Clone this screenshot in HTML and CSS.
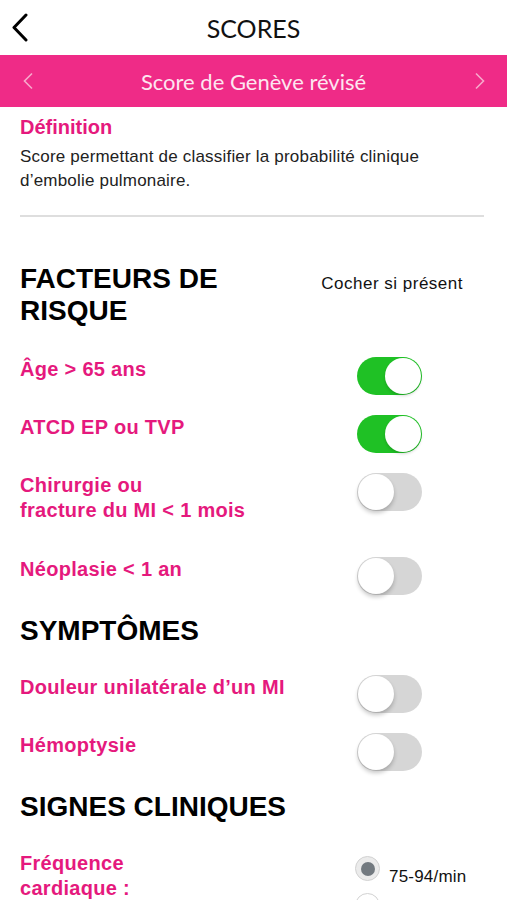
FILE: index.html
```html
<html lang="fr">
<head>
    <meta charset="UTF-8">
    <meta name="viewport" content="width=device-width, initial-scale=1.0">
    <title>Scores</title>
    <link rel="stylesheet" href="styles.css">
</head>
<body>
    <header class="topbar">
        <a class="back" href="#">
            <svg width="20" height="30" viewBox="0 0 20 30"><path d="M15 2 L3 14.5 L15 27" fill="none" stroke="#000" stroke-width="3" stroke-linecap="round" stroke-linejoin="round"/></svg>
        </a>
        <h1>SCORES</h1>
        <span></span>
    </header>

    <nav class="score-bar">
        <a href="#" class="arrow">
            <svg width="12" height="18" viewBox="0 0 12 18"><path d="M10 1.5 L2.5 9 L10 16.5" fill="none" stroke="#f7a9cb" stroke-width="1.6"/></svg>
        </a>
        <div class="score-title">Score de Genève révisé</div>
        <a href="#" class="arrow">
            <svg width="12" height="18" viewBox="0 0 12 18"><path d="M2 1.5 L9.5 9 L2 16.5" fill="none" stroke="#f7a9cb" stroke-width="1.6"/></svg>
        </a>
    </nav>

    <main class="content">
        <h3 class="def-title">Définition</h3>
        <p class="def-text">Score permettant de classifier la probabilité clinique d’embolie pulmonaire.</p>
        <hr class="divider">

        <div class="section-head">
            <h2>FACTEURS DE RISQUE</h2>
            <span class="note">Cocher si présent</span>
        </div>

        <div class="row">
            <label>Âge &gt; 65 ans</label>
            <span class="toggle on"><span class="knob"></span></span>
        </div>
        <div class="row">
            <label>ATCD EP ou TVP</label>
            <span class="toggle on"><span class="knob"></span></span>
        </div>
        <div class="row two-lines">
            <label>Chirurgie ou<br>fracture du MI &lt; 1 mois</label>
            <span class="toggle"><span class="knob"></span></span>
        </div>
        <div class="row">
            <label>Néoplasie &lt; 1 an</label>
            <span class="toggle"><span class="knob"></span></span>
        </div>

        <h2>SYMPTÔMES</h2>
        <div class="row">
            <label>Douleur unilatérale d’un MI</label>
            <span class="toggle"><span class="knob"></span></span>
        </div>
        <div class="row">
            <label>Hémoptysie</label>
            <span class="toggle"><span class="knob"></span></span>
        </div>

        <h2>SIGNES CLINIQUES</h2>
        <div class="row">
            <label>Fréquence<br>cardiaque :</label>
            <div class="options">
                <div class="option">
                    <span class="radio checked"><span class="dot"></span></span>
                    <span class="option-text">75-94/min</span>
                </div>
                <div class="option">
                    <span class="radio"></span>
                    <span class="option-text">≥ 95/min</span>
                </div>
            </div>
        </div>
    </main>
</body>
</html>
```

FILE: styles.css
```css
body {
    margin: 0;
    font-family: "Liberation Sans", Arial, sans-serif;
    background-color: #fff;
    color: #111;
}
.topbar {
    height: 55px;
    display: grid;
    grid-template-columns: 55px 1fr 55px;
    align-items: center;
}
.back {
    display: flex;
    padding-left: 11px;
    padding-top: 1px;
}
.topbar h1 {
    margin: 0;
    text-align: center;
    font-family: Lato, sans-serif;
    font-weight: 400;
    font-size: 25px;
    color: #111;
}
.score-bar {
    height: 52px;
    background-color: #ef2b87;
    display: grid;
    grid-template-columns: 55px 1fr 55px;
    align-items: center;
}
.arrow {
    display: flex;
    justify-content: center;
}
.score-title {
    text-align: center;
    font-family: Lato, sans-serif;
    font-size: 22px;
    color: #fde6f0;
}
.content {
    padding: 0 23px 0 20px;
}
.def-title {
    margin: 9px 0 0;
    font-size: 20px;
    line-height: 22px;
    color: #e5197d;
}
.def-text {
    margin: 7px 0 0;
    max-width: 440px;
    font-size: 17px;
    line-height: 24px;
    letter-spacing: 0.2px;
    color: #222;
}
.divider {
    margin: 22px 0 0;
    border: none;
    border-top: 2px solid #dedede;
}
h2 {
    margin: 0 0 28px;
    font-size: 28px;
    line-height: 32px;
    font-weight: bold;
    color: #000;
}
.section-head {
    display: flex;
    align-items: flex-start;
    margin-top: 46px;
    margin-bottom: 30px;
}
.section-head h2 {
    flex: 1;
    margin: 0;
    padding-right: 40px;
}
.note {
    padding-top: 11px;
    margin-right: 21px;
    font-size: 17px;
    line-height: 20px;
    letter-spacing: 0.5px;
    color: #111;
}
.row {
    display: flex;
    justify-content: space-between;
    align-items: flex-start;
    margin-bottom: 20px;
}
.row.two-lines {
    margin-bottom: 34px;
}
.row label {
    font-size: 20px;
    line-height: 25px;
    letter-spacing: 0.3px;
    font-weight: bold;
    color: #e5197d;
}
.toggle {
    width: 65px;
    height: 38px;
    margin-right: 62px;
    border-radius: 19px;
    background-color: #d6d6d6;
    display: flex;
    align-items: center;
    padding: 0 1px;
    box-sizing: border-box;
}
.toggle.on {
    background-color: #1fc125;
    justify-content: flex-end;
}
.knob {
    width: 36px;
    height: 36px;
    border-radius: 50%;
    background: #fff;
    box-shadow: 0 3px 4px rgba(0, 0, 0, 0.22);
}
.toggle.on .knob {
    box-shadow: 0 2px 3px rgba(0, 0, 0, 0.15);
}
.options {
    width: 129px;
    padding-top: 5px;
}
.option {
    display: flex;
    align-items: flex-start;
    margin-bottom: 6px;
}
.radio {
    width: 25px;
    height: 25px;
    box-sizing: border-box;
    border-radius: 50%;
    border: 1px solid #d2d2d2;
    background: #fff;
    display: flex;
    align-items: center;
    justify-content: center;
}
.radio.checked {
    background: #ebebeb;
}
.dot {
    width: 14px;
    height: 14px;
    border-radius: 50%;
    background: #737a80;
}
.option-text {
    padding-top: 11px;
    margin-left: 9px;
    font-size: 17px;
    line-height: 20px;
    letter-spacing: 0.2px;
    color: #111;
}
```
